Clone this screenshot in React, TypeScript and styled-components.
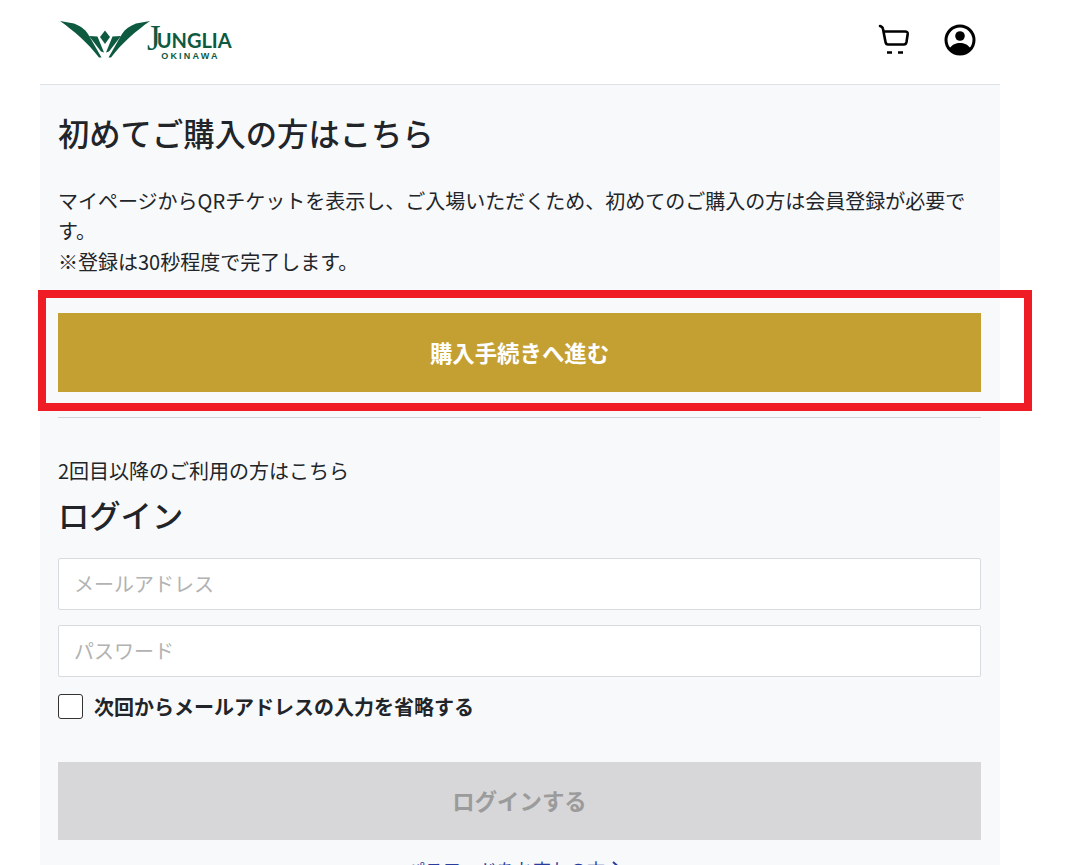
import React from "react";
import styled, { createGlobalStyle } from "styled-components";

const Global = createGlobalStyle`
  html, body { margin: 0; padding: 0; height: 865px; overflow: hidden; background: #fff; }
  body { font-family: "Noto Sans CJK JP", "Noto Sans", sans-serif; color: #212529; }
  * { box-sizing: border-box; }
`;
const Page = styled.div`
  position: relative;
  width: 960px;
  margin-left: 40px;
`;
const Header = styled.header`
  height: 85px;
  border-bottom: 1px solid #dee2e6;
  background: #fff;
  display: flex;
  align-items: flex-start;
  justify-content: space-between;
  padding: 21px 24px 0 20px;
`;
const Logo = styled.div`
  display: flex;
  align-items: flex-start;
`;
const LogoWords = styled.div`
  display: flex;
  flex-direction: column;
  align-items: flex-end;
  margin: 4px 0 0 -4px;
  color: #0d5a41;
`;
const LogoName = styled.div`
  display: flex;
  align-items: flex-start;
  height: 27px;
  white-space: nowrap;
`;
const LogoInitial = styled.span`
  font-family: "Liberation Serif", serif;
  font-size: 35px;
  line-height: 28px;
  letter-spacing: -4px;
`;
const LogoRest = styled.span`
  font-family: "Lato", "Liberation Sans", sans-serif;
  font-size: 20px;
  font-weight: 700;
  line-height: 20px;
  margin: 5px 0 0 0;
`;
const LogoSub = styled.span`
  font-family: "Liberation Sans", sans-serif;
  font-weight: 700;
  font-size: 9px;
  line-height: 8px;
  letter-spacing: 2.2px;
  margin: 0 12px 0 0;
`;
const Icons = styled.div`
  display: flex;
  align-items: flex-end;
  gap: 34px;
  color: #000;
  padding-top: 1px;
`;
const Main = styled.main`
  background: #f8f9fb;
  padding: 26px 19px 0 18px;
  height: 780px;
  overflow: hidden;
`;
const Heading = styled.h2`
  margin: 0;
  font-size: 31.3px;
  line-height: 44px;
  font-weight: 500;
`;
const Lead = styled.p`
  margin: 31px 0 0 0;
  font-size: 20px;
  line-height: 30.3px;
`;
const Action = styled.button<{ $disabled?: boolean }>`
  display: block;
  width: 100%;
  height: ${(p) => (p.$disabled ? "78px" : "79px")};
  padding: ${(p) => (p.$disabled ? "0 0 2px" : "0")};
  border: 0;
  border-radius: 0;
  font-family: inherit;
  font-size: 22.4px;
  font-weight: 700;
  color: ${(p) => (p.$disabled ? "#9b9b9b" : "#fff")};
  background: ${(p) => (p.$disabled ? "#d7d7d9" : "#c4a032")};
`;
const PrimaryWrap = styled.div`
  margin-top: 36px;
`;
const Divider = styled.hr`
  margin: 25px 0 0;
  border: 0;
  border-top: 1px solid #d0d3d8;
`;
const Sub = styled.p`
  margin: 38px 0 0;
  font-size: 20px;
  line-height: 30px;
`;
const LoginHeading = styled(Heading)`
  margin-top: 7px;
`;
const Field = styled.input`
  display: block;
  width: 100%;
  height: 52px;
  margin-top: 15px;
  padding: 0 15px;
  background: #fff;
  border: 1px solid #d8dbdf;
  border-radius: 2px;
  font-family: inherit;
  font-size: 20px;
  &::placeholder { color: #b2b2b2; opacity: 1; }
`;
const FirstField = styled(Field)`
  margin-top: 21px;
`;
const CheckRow = styled.label`
  display: flex;
  align-items: center;
  gap: 11px;
  margin-top: 14px;
  font-size: 20px;
  line-height: 32px;
  font-weight: 700;
`;
const Box = styled.input`
  appearance: none;
  width: 25px;
  height: 25px;
  margin: 0;
  background: #fff;
  border: 1px solid #333;
  border-radius: 3px;
`;
const LoginWrap = styled.div`
  margin-top: 39px;
`;
const Forgot = styled.a`
  display: flex;
  justify-content: center;
  align-items: center;
  gap: 5px;
  margin-top: 16px;
  padding-right: 8px;
  font-size: 18px;
  line-height: 26px;
  color: #2a3c9c;
  text-decoration: none;
`;
const RedBox = styled.div`
  position: absolute;
  left: -2px;
  top: 290px;
  width: 994px;
  height: 121px;
  border: 8px solid #ef1c25;
  pointer-events: none;
`;

const App = () => (
  <>
    <Global />
    <Page>
      <Header>
        <Logo>
          <svg width="91" height="38" viewBox="0 0 91 38" fill="#0d5a41">
            <path d="M0 0 L14 2.5 C20 5 25 8 28 13 L41.5 36.5 L39 36.5 C28 22 14 10 0 0 Z" />
            <path d="M90 0 L76 2.5 C70 5 65 8 62 13 L48.5 36.5 L51 36.5 C62 22 76 10 90 0 Z" />
            <path d="M29 15 L37.5 15.5 L44 31.5 L41 30.5 Z" />
            <path d="M61 15 L52.5 15.5 L46 31.5 L49 30.5 Z" />
            <path d="M45 9.5 L50 16 L45 23 L40 16 Z" />
          </svg>
          <LogoWords>
            <LogoName>
              <LogoInitial>J</LogoInitial>
              <LogoRest>UNGLIA</LogoRest>
            </LogoName>
            <LogoSub>OKINAWA</LogoSub>
          </LogoWords>
        </Logo>
        <Icons>
          <svg width="34" height="34" viewBox="0 0 34 34" fill="none" stroke="#000">
            <path d="M7.5 9.5 H29 Q32 9.5 31.7 12 L30.5 20 Q30 22.5 28 22.5 H12 Q10 22.5 9.5 20 L7 7 Q6.8 5 4 4" strokeWidth="2.6" strokeLinejoin="round" strokeLinecap="round" />
            <path d="M11 30.5 H16 M22 30.5 H27" strokeWidth="2.6" />
          </svg>
          <svg width="32" height="32" viewBox="0 0 32 32">
            <circle cx="16" cy="16" r="14" fill="#fff" stroke="#000" strokeWidth="3" />
            <circle cx="16" cy="12" r="4.8" fill="#000" />
            <path d="M5 25 C8 20.5 12 19 16 19 C20 19 24 20.5 27 25 C24 29 20 30.5 16 30.5 C12 30.5 8 29 5 25 Z" fill="#000" />
          </svg>
        </Icons>
      </Header>
      <Main>
        <Heading>初めてご購入の方はこちら</Heading>
        <Lead>
          マイページからQRチケットを表示し、ご入場いただくため、初めてのご購入の方は会員登録が必要です。
          <br />
          ※登録は30秒程度で完了します。
        </Lead>
        <PrimaryWrap>
          <Action type="button">購入手続きへ進む</Action>
        </PrimaryWrap>
        <Divider />
        <Sub>2回目以降のご利用の方はこちら</Sub>
        <LoginHeading>ログイン</LoginHeading>
        <FirstField placeholder="メールアドレス" />
        <Field placeholder="パスワード" />
        <CheckRow>
          <Box type="checkbox" />
          次回からメールアドレスの入力を省略する
        </CheckRow>
        <LoginWrap>
          <Action type="button" $disabled>ログインする</Action>
        </LoginWrap>
        <Forgot href="#">
          パスワードをお忘れの方
          <svg width="14" height="18" viewBox="0 0 14 18" fill="none" stroke="#2a3c9c" strokeWidth="2">
            <path d="M3 2 L11 9 L3 16" />
          </svg>
        </Forgot>
      </Main>
      <RedBox />
    </Page>
  </>
);
export default App;
